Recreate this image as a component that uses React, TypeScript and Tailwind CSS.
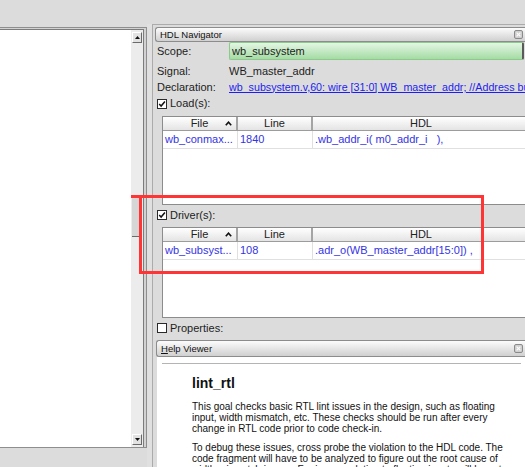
import React from "react";

function Check({ checked }: { checked: boolean }) {
  return (
    <span className="inline-flex h-[10px] w-[10px] shrink-0 items-center justify-center border border-[#2a2a2a] bg-white">
      {checked && (
        <svg width="8" height="8" viewBox="0 0 8 8">
          <path d="M1.2 4.1 L3.1 6.1 L6.9 1.5" fill="none" stroke="#111" strokeWidth="1.5" />
        </svg>
      )}
    </span>
  );
}

function CloseIcon() {
  return (
    <svg width="9" height="9" viewBox="0 0 9 9" className="shrink-0">
      <rect x="0.5" y="0.5" width="8" height="8" rx="1.5" fill="#cfcfcf" stroke="#8a8a8a" />
      <path d="M2.6 2.6 L6.4 6.4 M6.4 2.6 L2.6 6.4" stroke="#fafafa" strokeWidth="1.3" />
    </svg>
  );
}

function SortUp() {
  return (
    <svg width="7" height="5" viewBox="0 0 7 5">
      <path d="M0.8 4.3 L3.5 1.2 L6.2 4.3" fill="none" stroke="#111" strokeWidth="1.6" />
    </svg>
  );
}

function Table({ file, line, hdl, tall }: { file: string; line: string; hdl: string; tall: boolean }) {
  return (
    <div
      className={
        (tall ? "h-[91px] " : "h-[89px] ") +
        "ml-[9px] flex w-[368px] shrink-0 flex-col border border-[#8c8c8c] bg-white"
      }
    >
      <div className="flex h-[14px] shrink-0 border-b border-[#9c9c9c] bg-linear-to-b from-white to-[#e4e4e4] text-[11px] leading-none text-[#222]">
        <div className="grid w-[75px] shrink-0 grid-cols-[1fr_auto_1fr] items-center border-r-2 border-[#a4a4a4]">
          <span />
          <span>File</span>
          <span className="flex justify-end pr-[4px]">
            <SortUp />
          </span>
        </div>
        <div className="flex w-[75px] shrink-0 items-center justify-center border-r-2 border-[#a4a4a4]">Line</div>
        <div className="flex flex-1 items-center justify-center">HDL</div>
      </div>
      <div className="flex h-[18px] shrink-0 border-b border-[#e0e0e0] text-[11px] leading-none text-[#3434e4]">
        <div className="flex w-[75px] shrink-0 items-center border-r border-[#e0e0e0] pl-[2px] whitespace-nowrap">{file}</div>
        <div className="flex w-[75px] shrink-0 items-center border-r border-[#e0e0e0] pl-[2px]">{line}</div>
        <div className="flex flex-1 items-center pl-[2px] whitespace-pre">{hdl}</div>
      </div>
    </div>
  );
}

export default function App() {
  return (
    <div className="relative flex h-[467px] w-[525px] flex-col overflow-hidden bg-[#dcdcdc] font-['Liberation_Sans',Arial,Helvetica,sans-serif] text-[#1c1c1c]">
      <div className="h-[24px] shrink-0" />
      <div className="flex min-h-0 flex-1">
        {/* Left pane */}
        <div className="mt-[3px] flex h-[421px] w-[147px] shrink-0 flex-col border-t border-r border-b border-[#8e8e8e] bg-[#d2d2d2] pt-[1px] pr-[2px]">
          <div className="flex min-h-0 flex-1 border-t border-r border-[#7c7c7c]">
            <div className="flex-1 bg-white" />
            <div className="flex w-[12px] flex-col bg-[#ececec]">
              <div className="mt-[2px] ml-[1px] flex h-[11px] w-[10px] items-center justify-center border border-t-white border-l-white border-r-[#6a6a6a] border-b-[#6a6a6a] bg-[#e2e2e2]">
                <svg width="5" height="3" viewBox="0 0 5 3">
                  <path d="M0 3 L2.5 0 L5 3 Z" fill="#111" />
                </svg>
              </div>
              <div className="h-[154px]" />
              <div className="ml-[1px] h-[40px] w-[10px] border-b border-[#6a6a6a] bg-[#d6d6d6]" />
              <div className="flex-1" />
              <div className="mb-[2px] ml-[1px] flex h-[11px] w-[10px] items-center justify-center border border-t-white border-l-white border-r-[#6a6a6a] border-b-[#6a6a6a] bg-[#e2e2e2]">
                <svg width="5" height="3" viewBox="0 0 5 3">
                  <path d="M0 0 L2.5 3 L5 0 Z" fill="#111" />
                </svg>
              </div>
            </div>
          </div>
        </div>

        <div className="w-[5px] shrink-0 bg-[#e0e0e0]" />

        {/* Right panel */}
        <div className="flex min-w-0 flex-1 flex-col overflow-hidden border-t border-l border-[#ababab]">
          <div className="mt-[2px] ml-[2px] flex h-[15px] shrink-0 items-center justify-between rounded-l-[3px] border border-r-0 border-[#8c8c8c] bg-linear-to-b from-[#fcfcfc] to-[#d0d0d0] pl-[4px] pr-[2px]">
            <span className="text-[9.5px] leading-none text-[#111]">HDL Navigator</span>
            <CloseIcon />
          </div>

          <div className="flex h-[18px] shrink-0 items-center pl-[4px] text-[11px] leading-none">
            <span className="w-[72px] shrink-0">Scope:</span>
            <div className="mr-[1px] flex h-[18px] flex-1 items-center rounded-[2px] border border-r-2 border-[#8cca8c] border-r-[#5a5a5a] bg-linear-to-b from-[#e4f6e4] to-[#a4dba4] pl-[2px] text-[#1c1c1c]">
              wb_subsystem
            </div>
          </div>

          <div className="mt-[3px] flex h-[16px] shrink-0 items-center pl-[4px] text-[11px] leading-none">
            <span className="w-[72px] shrink-0">Signal:</span>
            <span>WB_master_addr</span>
          </div>

          <div className="flex h-[16px] shrink-0 items-center pl-[4px] text-[11px] leading-none whitespace-nowrap">
            <span className="w-[72px] shrink-0">Declaration:</span>
            <span className="text-[10.7px] text-[#1e1ef0] underline">wb_subsystem.v,60: wire [31:0] WB_master_addr; //Address bus</span>
          </div>

          <div className="flex h-[17px] shrink-0 items-center gap-[3px] pl-[4px] text-[11px] leading-none">
            <Check checked />
            <span>Load(s):</span>
          </div>

          <div className="mt-[4px] flex shrink-0">
            <Table file="wb_conmax..." line="1840" hdl=".wb_addr_i( m0_addr_i   )," tall={false} />
          </div>

          <div className="mt-[2px] flex h-[16px] shrink-0 items-center gap-[3px] pl-[4px] text-[11px] leading-none">
            <Check checked />
            <span>Driver(s):</span>
          </div>

          <div className="mt-[4px] flex shrink-0">
            <Table file="wb_subsyst..." line="108" hdl=".adr_o(WB_master_addr[15:0]) ," tall />
          </div>

          <div className="mt-[3px] flex h-[14px] shrink-0 items-center gap-[3px] pl-[4px] text-[11px] leading-none">
            <Check checked={false} />
            <span>Properties:</span>
          </div>

          <div className="mt-[5px] ml-[3px] flex h-[17px] shrink-0 items-center justify-between rounded-l-[3px] border border-r-0 border-[#8c8c8c] bg-linear-to-b from-[#fcfcfc] to-[#d0d0d0] pl-[4px] pr-[2px]">
            <span className="text-[9.5px] leading-none text-[#111]">
              <span className="underline">H</span>elp Viewer
            </span>
            <CloseIcon />
          </div>

          <div className="ml-[4px] flex-1 bg-white pt-[6px] text-[#111]">
            <div className="mr-[4px] ml-[5px] h-[1px] bg-[#b4b4b4]" />
            <div className="pl-[35px]">
              <div className="mt-[11px] text-[14px] leading-[16px] font-bold">lint_rtl</div>
              <div className="mt-[10px] text-[10px] leading-[11px] whitespace-nowrap">
                <div>This goal checks basic RTL lint issues in the design, such as floating</div>
                <div>input, width mismatch, etc. These checks should be run after every</div>
                <div>change in RTL code prior to code check-in.</div>
              </div>
              <div className="mt-[8px] text-[10px] leading-[11px] whitespace-nowrap">
                <div>To debug these issues, cross probe the violation to the HDL code. The</div>
                <div>code fragment will have to be analyzed to figure out the root cause of</div>
                <div>width mismatch issues. For issues relating to floating inputs will have to</div>
              </div>
            </div>
          </div>
        </div>
      </div>

      {/* Red annotation box */}
      <div className="absolute top-[195px] left-[139px] h-[79px] w-[345px] border-[3px] border-[#ff3434]" />
      <div className="absolute top-[195px] left-[131px] h-[3px] w-[9px] bg-[#ff3434]" />
    </div>
  );
}
